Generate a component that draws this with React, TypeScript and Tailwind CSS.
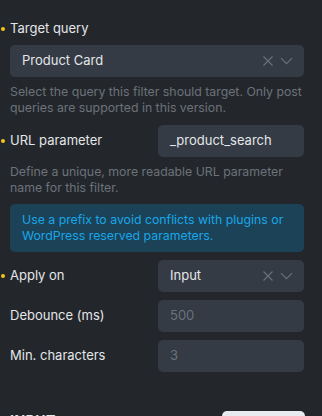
import React from "react";

const Dot = () => (
  <span className="absolute left-[1px] top-1/2 -translate-y-1/2 w-[4px] h-[4px] rounded-full bg-[#f5c518]" />
);

const XIcon = () => (
  <svg width="12" height="12" viewBox="0 0 12 12" fill="none" stroke="#69707a" strokeWidth="1.2">
    <path d="M1.5 1.5l9 9M10.5 1.5l-9 9" />
  </svg>
);
const Chevron = () => (
  <svg width="13" height="8" viewBox="0 0 13 8" fill="none" stroke="#69707a" strokeWidth="1.2">
    <path d="M1 1.2l5.5 5.5 5.5-5.5" />
  </svg>
);

function Select({ value, className = "" }: { value: string; className?: string }) {
  return (
    <div className={`h-[32px] rounded-[5px] bg-[#343b44] flex items-center pl-[12px] pr-[11px] ${className}`}>
      <span className="flex-1 text-[13px] text-[#e4e6e9]">{value}</span>
      <div className="flex items-center gap-[6px]">
        <XIcon />
        <Chevron />
      </div>
    </div>
  );
}

function Input({ value, placeholder = false }: { value: string; placeholder?: boolean }) {
  return (
    <div className="h-[32px] w-[146px] rounded-[5px] bg-[#343b44] flex items-center pl-[12px]">
      <span className={`text-[13px] ${placeholder ? "text-[#6b727b]" : "text-[#e4e6e9]"}`}>{value}</span>
    </div>
  );
}

function Label({ text, dot = false }: { text: string; dot?: boolean }) {
  return (
    <div className="relative flex items-center h-[18px]">
      {dot && <Dot />}
      <span className="pl-[10px] text-[13px] text-[#e4e6e9]">{text}</span>
    </div>
  );
}

function Row({ label, dot = false, children }: { label: string; dot?: boolean; children: React.ReactNode }) {
  return (
    <div className="relative flex items-center h-[32px]">
      {dot && <Dot />}
      <span className="pl-[10px] w-[158px] text-[13px] text-[#e4e6e9]">{label}</span>
      {children}
    </div>
  );
}

export default function App() {
  return (
    <div
      className="w-[322px] h-[416px] overflow-hidden bg-[#23272c] flex flex-col"
      style={{ fontFamily: "Inter, 'Noto Sans', sans-serif" }}
    >
      <div className="pr-[18px] pt-[20px]">
        <Label text="Target query" dot />
        <div className="pl-[10px] mt-[7px]">
          <Select value="Product Card" />
        </div>
        <p className="pl-[10px] mt-[7px] text-[12.3px] leading-[16px] text-[#6c727a]">
          Select the query this filter should target. Only post queries are supported in this version.
        </p>
        <div className="mt-[9px]">
          <Row label="URL parameter" dot>
            <Input value="_product_search" />
          </Row>
        </div>
        <p className="pl-[10px] mt-[7px] text-[12.3px] leading-[16px] text-[#6c727a]">
          Define a unique, more readable URL parameter name for this filter.
        </p>
        <div className="ml-[10px] mt-[8px] rounded-[5px] bg-[#1b4257] px-[12px] py-[8px] text-[12.3px] leading-[16px] text-[#1aa6e8]">
          Use a prefix to avoid conflicts with plugins or WordPress reserved parameters.
        </div>
        <div className="mt-[8px]">
          <Row label="Apply on" dot>
            <Select value="Input" className="w-[146px]" />
          </Row>
        </div>
        <div className="mt-[8px]">
          <Row label="Debounce (ms)">
            <Input value="500" placeholder />
          </Row>
        </div>
        <div className="mt-[8px]">
          <Row label="Min. characters">
            <Input value="3" placeholder />
          </Row>
        </div>
      </div>
      <div className="mt-[20px] h-[1px] bg-[#3d444d]" />
      <div className="flex items-start justify-between pl-[10px] pr-[17px] mt-[19px]">
        <span className="text-[14px] font-bold text-[#e4e6e9] tracking-[0.5px] leading-[18px] mt-[1px]">INPUT</span>
        <div className="w-[83px] h-[28px] rounded-[5px] bg-[#e9ebee]" />
      </div>
    </div>
  );
}
